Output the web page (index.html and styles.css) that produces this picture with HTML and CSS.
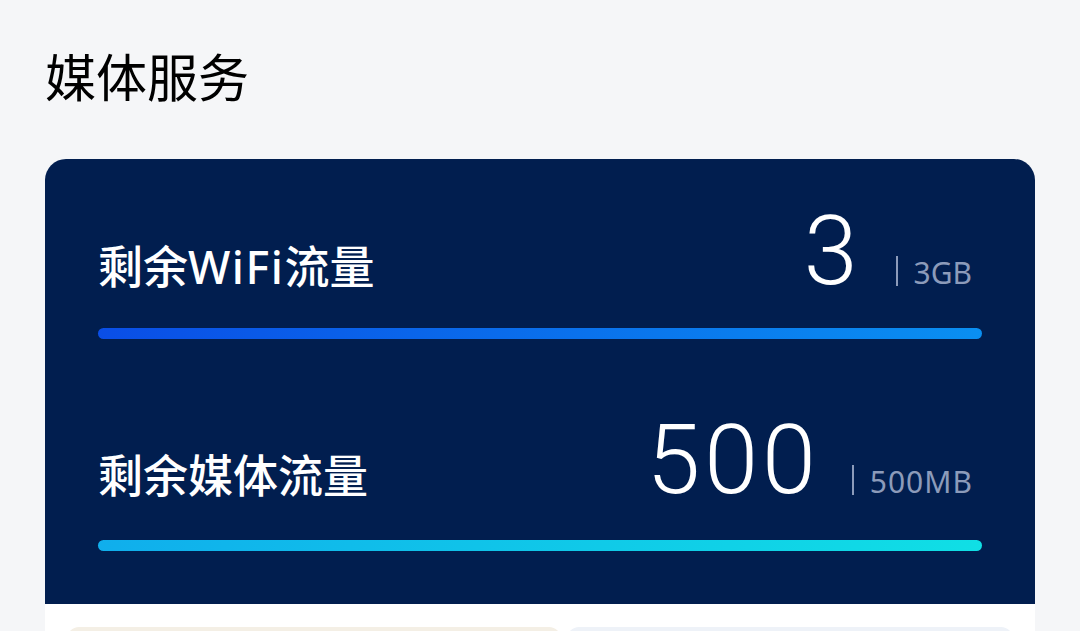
FILE: index.html
```html
<!DOCTYPE html>
<html lang="zh-CN">
<head>
<meta charset="utf-8">
<title>媒体服务</title>
<link rel="stylesheet" href="styles.css">
</head>
<body>
<div class="page">
  <h1 class="title">媒体服务</h1>
  <div class="card">
    <div class="card-top">
      <div class="row">
        <div class="label">剩余<span class="latin">WiFi</span>流量</div>
        <div class="num">3</div>
        <div class="unit"><span class="sep"></span>3GB</div>
      </div>
      <div class="bar bar-wifi"></div>
      <div class="row row2">
        <div class="label">剩余媒体流量</div>
        <div class="num num-wide">500</div>
        <div class="unit unit-wide"><span class="sep"></span>500MB</div>
      </div>
      <div class="bar bar-media"></div>
    </div>
    <div class="card-bottom">
      <div class="tile tile-warm"></div>
      <div class="tile tile-cool"></div>
    </div>
  </div>
</div>
</body>
</html>
```

FILE: styles.css
```css
html, body {
  margin: 0;
  padding: 0;
  background: #f5f6f8;
  height: 631px;
  overflow: hidden;
}
.page {
  padding: 50px 45px 0 45px;
  font-family: "Noto Sans", "Noto Sans CJK SC", sans-serif;
}
.title {
  margin: 0;
  font-family: "Noto Sans CJK SC", sans-serif;
  font-size: 51px;
  font-weight: 400;
  line-height: 50px;
  color: #000;
}
.card {
  margin-top: 59px;
  border-radius: 21px 21px 0 0;
  overflow: hidden;
  background: #fff;
}
.card-top {
  background: #011e4f;
  padding: 44px 53px 53px 53px;
}
.row {
  display: flex;
  align-items: baseline;
}
.row2 {
  margin-top: 73px;
}
.label {
  flex: 1;
  font-family: "Noto Sans", "Noto Sans CJK SC", sans-serif;
  font-size: 45px;
  font-weight: 500;
  line-height: 1;
  color: #fff;
}
.latin {
  letter-spacing: 1.5px;
}
.num {
  font-family: Roboto, sans-serif;
  font-weight: 300;
  font-size: 97px;
  line-height: 1;
  color: #fff;
}
.num-wide {
  letter-spacing: 4px;
}
.unit {
  margin-left: 38px;
  margin-right: 10px;
  font-family: "Noto Sans", sans-serif;
  font-size: 30px;
  line-height: 1;
  color: #8c9bba;
}
.unit-wide {
  margin-left: 32px;
  letter-spacing: 1px;
  margin-right: 9px;
}
.sep {
  display: inline-block;
  width: 2px;
  height: 30px;
  margin-right: 16px;
  background: #8c9bba;
  vertical-align: -2px;
}
.bar {
  height: 11px;
  border-radius: 6px;
  margin-top: 28px;
}
.bar-wifi {
  background: linear-gradient(90deg, #0a4ee6 0%, #0a8ff1 100%);
}
.bar-media {
  margin-top: 31px;
  background: linear-gradient(90deg, #10aeec 0%, #10dfe5 100%);
}
.card-bottom {
  display: grid;
  grid-template-columns: 493fr 446fr;
  gap: 6px;
  padding: 23px 22px 0 22px;
  background: #fff;
}
.tile {
  height: 120px;
  border-radius: 12px;
}
.tile-warm {
  background: #f4efe5;
}
.tile-cool {
  background: #eef2f8;
}
```
